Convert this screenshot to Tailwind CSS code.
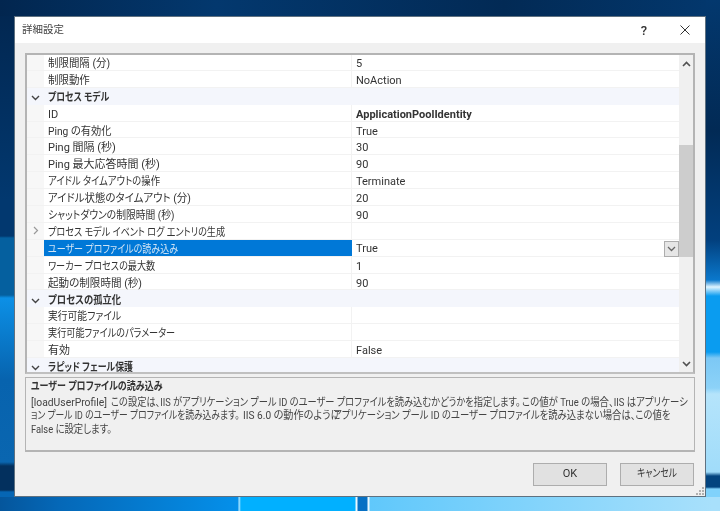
<!DOCTYPE html>
<html lang="ja">
<head>
<meta charset="utf-8">
<script src="https://cdn.jsdelivr.net/npm/@tailwindcss/browser@4"></script>
</head>
<body class="relative w-[720px] h-[511px] overflow-hidden bg-[#03305e] font-['Roboto','Noto_Sans_CJK_JP',sans-serif] text-[11px] text-[#333] [font-feature-settings:'palt']">
  <!-- wallpaper -->
  <div class="absolute left-0 top-0 w-[14px] h-[511px] bg-[linear-gradient(180deg,#02264f_0px,#02386f_200px,#02386f_236px,#05609f_238px,#05609f_295px,#0c90e6_298px,#0763ae_380px,#0a66b0_462px,#03305e_466px,#03305e_490px,#0666b4_492px)]"></div>
  <div class="absolute left-0 top-0 w-[720px] h-[16px] bg-[linear-gradient(90deg,#02264f,#03386e_30%,#022a55_70%,#03386e)]"></div>
  <div class="absolute left-[706px] top-0 w-[14px] h-[511px] bg-[linear-gradient(180deg,#03386e_0px,#022a55_130px,#02407e_240px,#0a78cc_280px,#e0f4ff_287px,#0a9cf0_296px,#0a9cf0_352px,#7cc8f5_358px,#8cd2f8_388px,#b5e4fb_394px,#a0dcfa_472px,#03447f_476px,#03447f_487px,#80d2fb_489px)]"></div>
  <div class="absolute left-0 top-[497px] w-[720px] h-[14px] bg-[linear-gradient(90deg,#05569c_0px,#0568b8_60px,#0590ea_238px,#b8e8ff_239px,#01b0ff_241px,#01b0ff_355px,#e8f8ff_356px,#e8f8ff_357px,#0670c4_358px,#0670c4_367px,#e8f8ff_368px,#e8f8ff_369px,#60c8fb_370px,#a8e0fb_712px)]"></div>

  <!-- dialog -->
  <div class="absolute left-[14px] top-[16px] w-[692px] h-[481px] flex flex-col bg-[#f0f0f0] border border-[#5f7180] blur-[0.3px]">
    <div class="h-[26px] shrink-0 bg-white flex items-center pl-[7px] pr-[15px] text-[#444]">
      <span class="text-[10.5px]">詳細設定</span>
      <span class="ml-auto mr-[33px] text-[13px] leading-none font-medium text-[#333]">?</span>
      <svg class="w-[10px] h-[10px]" viewBox="0 0 10 10" fill="none" stroke="#333" stroke-width="1"><path d="M.5.5l9 9M9.5.5l-9 9"/></svg>
    </div>
    <div class="flex-1 flex flex-col px-[10px] pt-[10px]">
      <!-- property grid -->
      <div class="h-[321px] shrink-0 border-2 border-[#b4b4b4] border-b-[#c0c0c0] bg-white flex overflow-hidden">
        <div class="w-[652px] shrink-0 flex flex-col -mt-px">
          <div class="flex h-[16.9px] shrink-0 border-b border-[#f2f2f2]"><div class="w-[17px] bg-[#f7f7f7]"></div><div class="w-[308px] pl-[4px] border-r border-[#f2f2f2] leading-[19px]"><span class="inline-block origin-left scale-x-[.95] whitespace-nowrap">制限間隔 (分)</span></div><div class="pl-[4px] leading-[19px]">5</div></div>
          <div class="flex h-[16.9px] shrink-0 border-b border-[#f2f2f2]"><div class="w-[17px] bg-[#f7f7f7]"></div><div class="w-[308px] pl-[4px] border-r border-[#f2f2f2] leading-[19px]"><span class="inline-block origin-left scale-x-[.95] whitespace-nowrap">制限動作</span></div><div class="pl-[4px] leading-[19px]">NoAction</div></div>
          <div class="flex h-[16.9px] shrink-0 bg-[#f4f6fc] items-center pt-[4px]"><div class="w-[17px] flex justify-center"><svg class="w-[9px] h-[6px]" viewBox="0 0 9 6" fill="none" stroke="#444" stroke-width="1.4"><path d="M1 1l3.5 3.5L8 1"/></svg></div><div class="pl-[4px] font-bold"><span class="inline-block origin-left scale-x-[.8] whitespace-nowrap">プロセス モデル</span></div></div>
          <div class="flex h-[16.9px] shrink-0 border-b border-[#f2f2f2]"><div class="w-[17px] bg-[#f7f7f7]"></div><div class="w-[308px] pl-[4px] border-r border-[#f2f2f2] leading-[19px]">ID</div><div class="pl-[4px] leading-[19px] font-bold">ApplicationPoolIdentity</div></div>
          <div class="flex h-[16.9px] shrink-0 border-b border-[#f2f2f2]"><div class="w-[17px] bg-[#f7f7f7]"></div><div class="w-[308px] pl-[4px] border-r border-[#f2f2f2] leading-[19px]"><span class="inline-block origin-left scale-x-[.93] whitespace-nowrap">Ping の有効化</span></div><div class="pl-[4px] leading-[19px]">True</div></div>
          <div class="flex h-[16.9px] shrink-0 border-b border-[#f2f2f2]"><div class="w-[17px] bg-[#f7f7f7]"></div><div class="w-[308px] pl-[4px] border-r border-[#f2f2f2] leading-[19px]">Ping 間隔 (秒)</div><div class="pl-[4px] leading-[19px]">30</div></div>
          <div class="flex h-[16.9px] shrink-0 border-b border-[#f2f2f2]"><div class="w-[17px] bg-[#f7f7f7]"></div><div class="w-[308px] pl-[4px] border-r border-[#f2f2f2] leading-[19px]">Ping 最大応答時間 (秒)</div><div class="pl-[4px] leading-[19px]">90</div></div>
          <div class="flex h-[16.9px] shrink-0 border-b border-[#f2f2f2]"><div class="w-[17px] bg-[#f7f7f7]"></div><div class="w-[308px] pl-[4px] border-r border-[#f2f2f2] leading-[19px]"><span class="inline-block origin-left scale-x-[.85] whitespace-nowrap">アイドル タイムアウトの操作</span></div><div class="pl-[4px] leading-[19px]">Terminate</div></div>
          <div class="flex h-[16.9px] shrink-0 border-b border-[#f2f2f2]"><div class="w-[17px] bg-[#f7f7f7]"></div><div class="w-[308px] pl-[4px] border-r border-[#f2f2f2] leading-[19px]"><span class="inline-block origin-left scale-x-[.95] whitespace-nowrap">アイドル状態のタイムアウト (分)</span></div><div class="pl-[4px] leading-[19px]">20</div></div>
          <div class="flex h-[16.9px] shrink-0 border-b border-[#f2f2f2]"><div class="w-[17px] bg-[#f7f7f7]"></div><div class="w-[308px] pl-[4px] border-r border-[#f2f2f2] leading-[19px]"><span class="inline-block origin-left scale-x-[.89] whitespace-nowrap">シャットダウンの制限時間 (秒)</span></div><div class="pl-[4px] leading-[19px]">90</div></div>
          <div class="flex h-[16.9px] shrink-0 border-b border-[#f2f2f2]"><div class="w-[17px] bg-[#f7f7f7] flex items-center justify-center"><svg class="w-[6px] h-[9px]" viewBox="0 0 6 9" fill="none" stroke="#999" stroke-width="1.2"><path d="M1 1l3.5 3.5L1 8"/></svg></div><div class="w-[308px] pl-[4px] border-r border-[#f2f2f2] leading-[19px]"><span class="inline-block origin-left scale-x-[.83] whitespace-nowrap">プロセス モデル イベント ログ エントリの生成</span></div></div>
          <div class="flex h-[16.9px] shrink-0 border-b border-[#f2f2f2]"><div class="w-[17px] bg-[#f7f7f7]"></div><div class="w-[308px] pl-[4px] bg-[#0078d7] text-[#cfe3f5] leading-[19px]"><span class="inline-block origin-left scale-x-[.82] whitespace-nowrap">ユーザー プロファイルの読み込み</span></div><div class="flex-1 flex items-center pl-[4px] pt-[2px] leading-[16px]"><span>True</span><span class="ml-auto w-[15px] h-[16px] border border-[#adadad] bg-[#e6e6e6] flex items-center justify-center"><svg class="w-[9px] h-[6px]" viewBox="0 0 9 6" fill="none" stroke="#666" stroke-width="1.3"><path d="M1 1l3.5 3.5L8 1"/></svg></span></div></div>
          <div class="flex h-[16.9px] shrink-0 border-b border-[#f2f2f2]"><div class="w-[17px] bg-[#f7f7f7]"></div><div class="w-[308px] pl-[4px] border-r border-[#f2f2f2] leading-[19px]"><span class="inline-block origin-left scale-x-[.83] whitespace-nowrap">ワーカー プロセスの最大数</span></div><div class="pl-[4px] leading-[19px]">1</div></div>
          <div class="flex h-[16.9px] shrink-0 border-b border-[#f2f2f2]"><div class="w-[17px] bg-[#f7f7f7]"></div><div class="w-[308px] pl-[4px] border-r border-[#f2f2f2] leading-[19px]"><span class="inline-block origin-left scale-x-[.96] whitespace-nowrap">起動の制限時間 (秒)</span></div><div class="pl-[4px] leading-[19px]">90</div></div>
          <div class="flex h-[16.9px] shrink-0 bg-[#f4f6fc] items-center pt-[4px]"><div class="w-[17px] flex justify-center"><svg class="w-[9px] h-[6px]" viewBox="0 0 9 6" fill="none" stroke="#444" stroke-width="1.4"><path d="M1 1l3.5 3.5L8 1"/></svg></div><div class="pl-[4px] font-bold"><span class="inline-block origin-left scale-x-[.85] whitespace-nowrap">プロセスの孤立化</span></div></div>
          <div class="flex h-[16.9px] shrink-0 border-b border-[#f2f2f2]"><div class="w-[17px] bg-[#f7f7f7]"></div><div class="w-[308px] pl-[4px] border-r border-[#f2f2f2] leading-[19px]"><span class="inline-block origin-left scale-x-[.89] whitespace-nowrap">実行可能ファイル</span></div></div>
          <div class="flex h-[16.9px] shrink-0 border-b border-[#f2f2f2]"><div class="w-[17px] bg-[#f7f7f7]"></div><div class="w-[308px] pl-[4px] border-r border-[#f2f2f2] leading-[19px]"><span class="inline-block origin-left scale-x-[.83] whitespace-nowrap">実行可能ファイルのパラメーター</span></div></div>
          <div class="flex h-[16.9px] shrink-0 border-b border-[#f2f2f2]"><div class="w-[17px] bg-[#f7f7f7]"></div><div class="w-[308px] pl-[4px] border-r border-[#f2f2f2] leading-[19px]">有効</div><div class="pl-[4px] leading-[19px]">False</div></div>
          <div class="flex h-[16.9px] shrink-0 bg-[#f4f6fc] items-center pt-[4px]"><div class="w-[17px] flex justify-center"><svg class="w-[9px] h-[6px]" viewBox="0 0 9 6" fill="none" stroke="#444" stroke-width="1.4"><path d="M1 1l3.5 3.5L8 1"/></svg></div><div class="pl-[4px] font-bold"><span class="inline-block origin-left scale-x-[.81] whitespace-nowrap">ラピッド フェール保護</span></div></div>
        </div>
        <!-- scrollbar -->
        <div class="flex-1 bg-[#f0f0f0] flex flex-col">
          <div class="h-[17px] shrink-0 flex items-center justify-center"><svg class="w-[9px] h-[6px]" viewBox="0 0 9 6" fill="none" stroke="#505050" stroke-width="1.6"><path d="M1 5l3.5-3.5L8 5"/></svg></div>
          <div class="flex-1 pt-[73px]"><div class="h-[112px] bg-[#cdcdcd]"></div></div>
          <div class="h-[17px] shrink-0 flex items-center justify-center"><svg class="w-[9px] h-[6px]" viewBox="0 0 9 6" fill="none" stroke="#505050" stroke-width="1.6"><path d="M1 1l3.5 3.5L8 1"/></svg></div>
        </div>
      </div>
      <!-- description -->
      <div class="mt-[3px] h-[75px] shrink-0 border border-[#b4b4b4] border-b-2 pl-[5px] pt-px overflow-hidden whitespace-nowrap text-[11px] leading-[13.5px] text-[#444]">
        <div class="font-bold text-[#333] h-[16.5px] leading-[15px]"><span class="inline-block origin-left scale-x-[.82]">ユーザー プロファイルの読み込み</span></div>
        <div class="flex"><span class="w-[80px] shrink-0 origin-left scale-x-[.94]">[loadUserProfile]</span><span class="w-[411px] shrink-0 origin-left scale-x-[.84]">この設定は、IIS がアプリケーション プール ID のユーザー プロファイルを読み込むかどうかを指定します。</span><span class="shrink-0 origin-left scale-x-[.855]">この値が True の場合、IIS はアプリケーシ</span></div>
        <div class="flex"><span class="w-[212px] shrink-0 origin-left scale-x-[.8]">ョン プール ID のユーザー プロファイルを読み込みます。</span><span class="w-[90px] shrink-0 origin-left scale-x-[.92]">IIS 6.0 の動作のように</span><span class="shrink-0 origin-left scale-x-[.85]">アプリケーション プール ID のユーザー プロファイルを読み込まない場合は、この値を</span></div>
        <div><span class="inline-block origin-left scale-x-[.85]">False に設定します。</span></div>
      </div>
      <!-- buttons -->
      <div class="mt-[11px] flex justify-end gap-[13px] pr-[1px]">
        <button class="w-[74px] h-[23px] bg-[#e1e1e1] border border-[#adadad] text-[#333]">OK</button>
        <button class="w-[74px] h-[23px] bg-[#e1e1e1] border border-[#adadad] text-[#333]"><span class="inline-block scale-x-[.8]">キャンセル</span></button>
      </div>
    </div>
    <!-- size grip -->
    <svg class="absolute right-[1px] bottom-[1px] w-[9px] h-[9px]" viewBox="0 0 9 9" fill="#b0b0b0"><path d="M7 1h2v2H7zM4 4h2v2H4zM7 4h2v2H7zM1 7h2v2H1zM4 7h2v2H4zM7 7h2v2H7z"/></svg>
  </div>
</body>
</html>
